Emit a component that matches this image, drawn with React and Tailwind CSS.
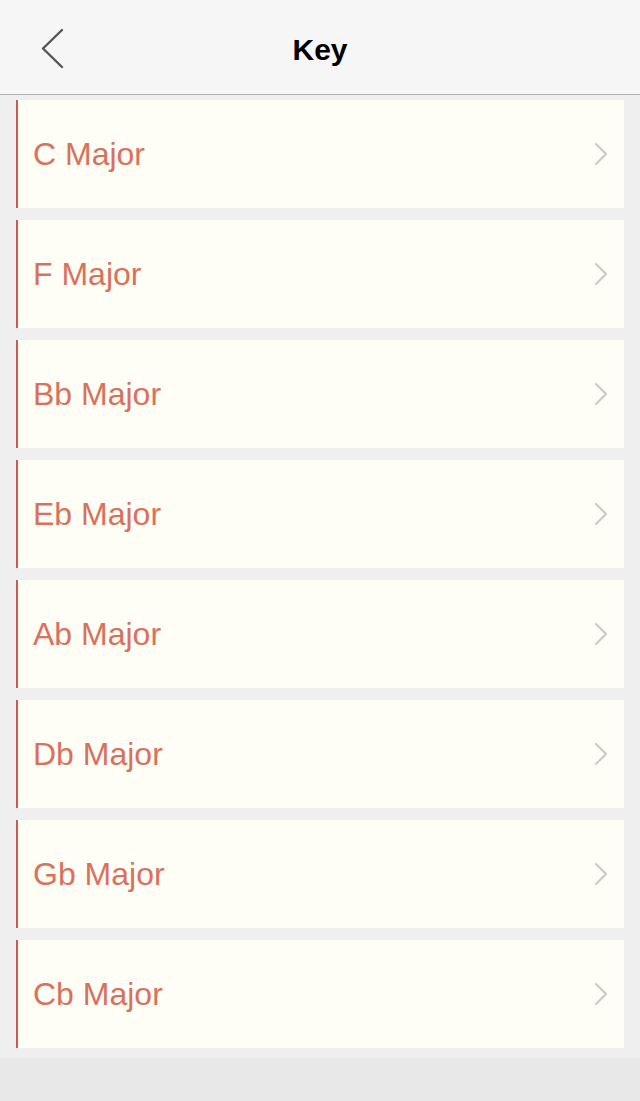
import React from "react";

const keys = ["C Major", "F Major", "Bb Major", "Eb Major", "Ab Major", "Db Major", "Gb Major", "Cb Major"];

export default function App() {
  return (
    <div className="w-[640px] h-[1101px] flex flex-col bg-[#e8e8e8]" style={{ fontFamily: '"Liberation Sans", Arial, sans-serif' }}>
      <div className="h-[95px] shrink-0 bg-[#f6f6f7] border-b border-[#b2b2b2] relative flex items-center justify-center">
        <svg className="absolute left-[40px] top-[28px]" width="26" height="41" viewBox="0 0 26 41" fill="none">
          <path d="M22 2 L3 20.5 L22 39" stroke="#555" strokeWidth="2.4" strokeLinecap="round" strokeLinejoin="round" />
        </svg>
        <span className="text-[30px] font-bold text-black leading-none mt-[6px]">Key</span>
      </div>
      <div className="bg-[#efeff0] pl-[16px] pr-[16px] pt-[5px] pb-[10px] flex flex-col gap-[12px]">
        {keys.map((k) => (
          <div key={k} className="h-[108px] bg-[#fffef6] border-l-2 border-[#d0584a] flex items-center justify-between pl-[15px] pr-[16px]">
            <span className="text-[32px] text-[#d9715b] leading-none">{k}</span>
            <svg width="14" height="24" viewBox="0 0 14 24" fill="none">
              <path d="M2 2 L12 12 L2 22" stroke="#c9c9c9" strokeWidth="2" strokeLinecap="round" strokeLinejoin="round" />
            </svg>
          </div>
        ))}
      </div>
    </div>
  );
}
